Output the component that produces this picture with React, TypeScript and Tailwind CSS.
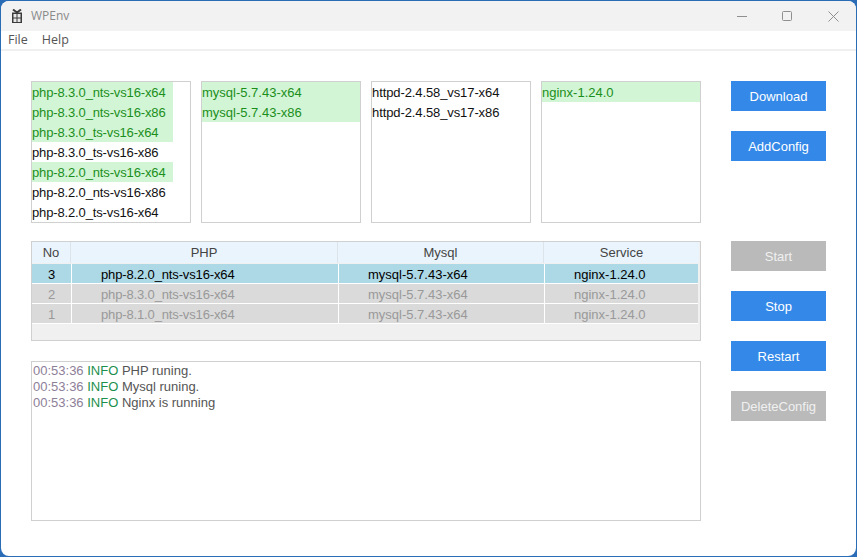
import React from 'react';

const lists = [
  [
    { name: 'php-8.3.0_nts-vs16-x64', on: true },
    { name: 'php-8.3.0_nts-vs16-x86', on: true },
    { name: 'php-8.3.0_ts-vs16-x64', on: true },
    { name: 'php-8.3.0_ts-vs16-x86', on: false },
    { name: 'php-8.2.0_nts-vs16-x64', on: true },
    { name: 'php-8.2.0_nts-vs16-x86', on: false },
    { name: 'php-8.2.0_ts-vs16-x64', on: false },
  ],
  [
    { name: 'mysql-5.7.43-x64', on: true },
    { name: 'mysql-5.7.43-x86', on: true },
  ],
  [
    { name: 'httpd-2.4.58_vs17-x64', on: false },
    { name: 'httpd-2.4.58_vs17-x86', on: false },
  ],
  [{ name: 'nginx-1.24.0', on: true }],
];

const rows = [
  { no: 3, php: 'php-8.2.0_nts-vs16-x64', active: true },
  { no: 2, php: 'php-8.3.0_nts-vs16-x64', active: false },
  { no: 1, php: 'php-8.1.0_nts-vs16-x64', active: false },
];

const logs = ['PHP runing.', 'Mysql runing.', 'Nginx is running'];

const Btn = ({ label, off, className }: { label: string; off?: boolean; className?: string }) => (
  <button className={`w-[95px] h-[30px] pt-px text-[13px] ${off ? 'bg-[#bababa] text-[#f0f0f0]' : 'bg-[#3489e8] text-white'} ${className || ''}`}>
    {label}
  </button>
);

const GiftIcon = () => (
  <svg width="12" height="14" viewBox="0 0 12 14" className="text-[#3c3c3c]">
    <path d="M1 3.5h10V14H1z" fill="currentColor" />
    <path d="M2.5 5h3v3.5h-3zM6.5 5h3v3.5h-3zM2.5 9.5h3v3.5h-3zM6.5 9.5h3v3.5h-3z" fill="#e8e8e8" />
    <path d="M2 .5l4 3 4-3" stroke="currentColor" strokeWidth="2" fill="none" />
  </svg>
);

export default function App() {
  return (
    <div className="w-[857px] h-[557px] bg-[#2a6cb5] overflow-hidden font-['Liberation_Sans',sans-serif] text-[13px] text-[#222]">
      <div className="w-[855px] h-[555px] m-px rounded-lg bg-white flex flex-col overflow-hidden">
        <div className="h-[30px] shrink-0 bg-[#f2f2f2] flex items-center pl-[10px]">
          <GiftIcon />
          <span className="ml-[8px] text-[12px] text-[#8a8a8a] font-['Open_Sans',sans-serif]">WPEnv</span>
          <div className="ml-auto flex items-center text-[#8f8f8f]">
            <svg width="11" height="11" viewBox="0 0 11 11" className="mr-[34px]">
              <path d="M0 5.5h10" stroke="currentColor" fill="none" />
            </svg>
            <svg width="11" height="11" viewBox="0 0 11 11" className="mr-[35px]">
              <rect x="0.5" y="0.5" width="9" height="9" rx="1" stroke="currentColor" fill="none" />
            </svg>
            <svg width="11" height="11" viewBox="0 0 11 11" className="mr-[17px]">
              <path d="M0.5 0.5l10 10M10.5 0.5l-10 10" stroke="currentColor" fill="none" />
            </svg>
          </div>
        </div>

        <div className="h-[20px] shrink-0 border-b-2 border-[#f0f0f0] flex items-center pl-[7px] gap-[14px] text-[12.5px] text-[#555] font-['Open_Sans',sans-serif]">
          <span>File</span>
          <span>Help</span>
        </div>

        <div className="flex pt-[30px] pl-[30px]">
          <div className="w-[670px]">
            <div className="flex gap-[10px]">
              {lists.map((list, i) => (
                <div key={i} className="w-[160px] h-[142px] border border-[#d0d0d0] overflow-hidden">
                  {list.map((item) => (
                    <div
                      key={item.name}
                      className={`h-5 leading-[21px] whitespace-nowrap ${i === 0 ? 'w-[141px] tracking-[-0.14px]' : ''} ${i === 2 ? 'tracking-[-0.1px]' : ''} ${item.on ? 'bg-[#d2f5d6] text-[#1b8f1b]' : 'text-[#111]'}`}
                    >
                      {item.name}
                    </div>
                  ))}
                </div>
              ))}
            </div>

            <div className="mt-[18px] h-[100px] border border-[#d0d0d0] bg-[#f0f0f0] pr-[2px]">
              <div className="flex h-[21px] bg-[#eaf4fc] text-[#444] mr-[-1px]">
                <div className="w-[39px] border-r border-[#dce4ea] text-center leading-[21px]">No</div>
                <div className="w-[267px] border-r border-[#dce4ea] text-center leading-[21px]">PHP</div>
                <div className="w-[206px] border-r border-[#dce4ea] text-center leading-[21px]">Mysql</div>
                <div className="flex-1 text-center leading-[21px]">Service</div>
              </div>
              {rows.map((r) => (
                <div
                  key={r.no}
                  className={`flex h-5 border-b border-white leading-[21px] ${r.no === 3 ? 'mt-px bg-[#add8e6] text-black' : 'bg-[#dadada] text-[#999]'}`}
                >
                  <div className="w-[40px] border-r border-white text-center">{r.no}</div>
                  <div className="w-[267px] border-r border-white pl-[29px] tracking-[-0.14px]">{r.php}</div>
                  <div className="w-[206px] border-r border-white pl-[29px]">mysql-5.7.43-x64</div>
                  <div className="flex-1 pl-[29px]">nginx-1.24.0</div>
                </div>
              ))}
            </div>

            <div className="mt-[20px] h-[160px] border border-[#d0d0d0] px-px pt-px leading-4 text-[#555]">
              {logs.map((msg) => (
                <div key={msg}>
                  <span className="text-[#8d8098]">00:53:36</span> <span className="text-[#1b8f4b]">INFO</span> {msg}
                </div>
              ))}
            </div>
          </div>

          <div className="ml-[30px] flex flex-col">
            <Btn label="Download" />
            <Btn label="AddConfig" className="mt-5" />
            <Btn label="Start" off className="mt-[80px]" />
            <Btn label="Stop" className="mt-5" />
            <Btn label="Restart" className="mt-5" />
            <Btn label="DeleteConfig" off className="mt-5" />
          </div>
        </div>
      </div>
    </div>
  );
}
